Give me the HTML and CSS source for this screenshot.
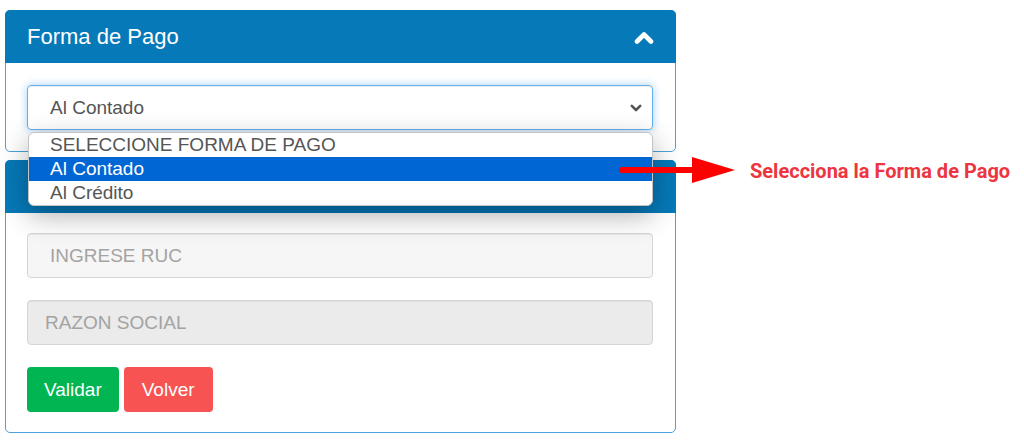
FILE: index.html
```html
<!DOCTYPE html>
<html>
  <head>
    <title>Forma de Pago</title>
    <link rel="stylesheet" href="styles.css">
  </head>

  <body>
    <div class="container">
      <div class="panel">
        <div class="panel-heading">
          <div class="panel-title">Forma de Pago</div>
          <svg class="collapse-icon" width="20" height="14" viewBox="0 0 20 14">
            <polyline points="3,11.5 10,4.5 17,11.5" fill="none" stroke="#fff" stroke-width="4.6" stroke-linecap="round" stroke-linejoin="round"/>
          </svg>
        </div>
        <div class="panel-body">
          <div class="select-wrap">
            <div class="select">
              <span>Al Contado</span>
              <svg width="12" height="8" viewBox="0 0 12 8">
                <polyline points="1.8,1.8 6,6 10.2,1.8" fill="none" stroke="#555" stroke-width="2.6" stroke-linecap="round" stroke-linejoin="round"/>
              </svg>
            </div>
            <ul class="options">
              <li>SELECCIONE FORMA DE PAGO</li>
              <li class="selected">Al Contado</li>
              <li>Al Crédito</li>
            </ul>
          </div>
        </div>
      </div>

      <div class="panel">
        <div class="panel-heading"></div>
        <div class="panel-body form">
          <div class="input ruc">INGRESE RUC</div>
          <div class="input disabled">RAZON SOCIAL</div>
          <div class="actions">
            <button class="btn btn-success">Validar</button>
            <button class="btn btn-danger">Volver</button>
          </div>
        </div>
      </div>
    </div>

    <!-- annotation -->
    <div class="note">
      <svg width="120" height="28" viewBox="0 0 120 28">
        <line x1="3" y1="13" x2="80" y2="13" stroke="#f00" stroke-width="6" stroke-linecap="round"/>
        <polygon points="73,0 116,13 73,26" fill="#f00"/>
      </svg>
      <span>Selecciona la Forma de Pago</span>
    </div>
  </body>
</html>
```

FILE: styles.css
```css
* {
  box-sizing: border-box;
  margin: 0;
  padding: 0;
}

body {
  font-family: "Liberation Sans", Arial, sans-serif;
  background: #fff;
  color: #555;
  padding: 10px 0 0 5px;
}

.container {
  display: flex;
  flex-direction: column;
  gap: 8px;
  width: 671px;
}

.panel {
  border: 1px solid #4aa3da;
  border-radius: 5px;
  background: #fff;
}

.panel-heading {
  display: flex;
  justify-content: space-between;
  align-items: center;
  height: 53px;
  margin: -1px -1px 0;
  padding: 0 22px 0 22px;
  background: #0679b8;
  border-radius: 5px 5px 0 0;
}

.panel-title {
  font-size: 22px;
  color: #fff;
}

.panel-body {
  padding: 22px 22px 21px 21px;
}

.select-wrap {
  position: relative;
}

.select {
  display: flex;
  justify-content: space-between;
  align-items: center;
  height: 45px;
  padding: 0 10px 0 22px;
  font-size: 19px;
  color: #555;
  border: 1px solid #66afe9;
  border-radius: 4px;
  box-shadow: inset 0 1px 1px rgba(0, 0, 0, 0.075), 0 0 8px rgba(102, 175, 233, 0.6);
}

.options {
  list-style: none;
  position: absolute;
  top: calc(100% + 2px);
  left: 1px;
  right: 0;
  z-index: 5;
  background: #fff;
  border: 1px solid #c4c4c4;
  border-radius: 6px;
  overflow: hidden;
  box-shadow: 0 9px 28px rgba(0, 0, 0, 0.32);
}

.options li {
  height: 24px;
  line-height: 24px;
  padding-left: 21px;
  font-size: 19px;
  color: #555;
}

.options li.selected {
  background: #0066d3;
  color: #fff;
}

.form {
  display: flex;
  flex-direction: column;
  gap: 22px;
  padding-top: 20px;
  padding-bottom: 20px;
}

.input {
  height: 45px;
  display: flex;
  align-items: center;
  font-size: 19px;
  color: #a3a3a3;
  border: 1px solid #d6d6d6;
  border-radius: 4px;
  box-shadow: inset 0 1px 1px rgba(0, 0, 0, 0.06);
}

.input.ruc {
  padding-left: 22px;
  background: #f6f6f6;
}

.input.disabled {
  padding-left: 17px;
  background: #ebebeb;
}

.actions {
  display: flex;
  gap: 5px;
}

.btn {
  height: 45px;
  padding: 0 17px;
  font-family: "Liberation Sans", Arial, sans-serif;
  font-size: 19px;
  color: #fff;
  border: none;
  border-radius: 4px;
}

.btn-success { background: #00b552; }
.btn-danger { background: #f65352; padding: 0 18px; }

.note {
  position: absolute;
  left: 619px;
  top: 157px;
  z-index: 10;
  display: flex;
  align-items: center;
  gap: 11px;
}

.note span {
  font-family: Roboto, "Liberation Sans", sans-serif;
  font-weight: 700;
  font-size: 20px;
  color: #ec3540;
}
```
